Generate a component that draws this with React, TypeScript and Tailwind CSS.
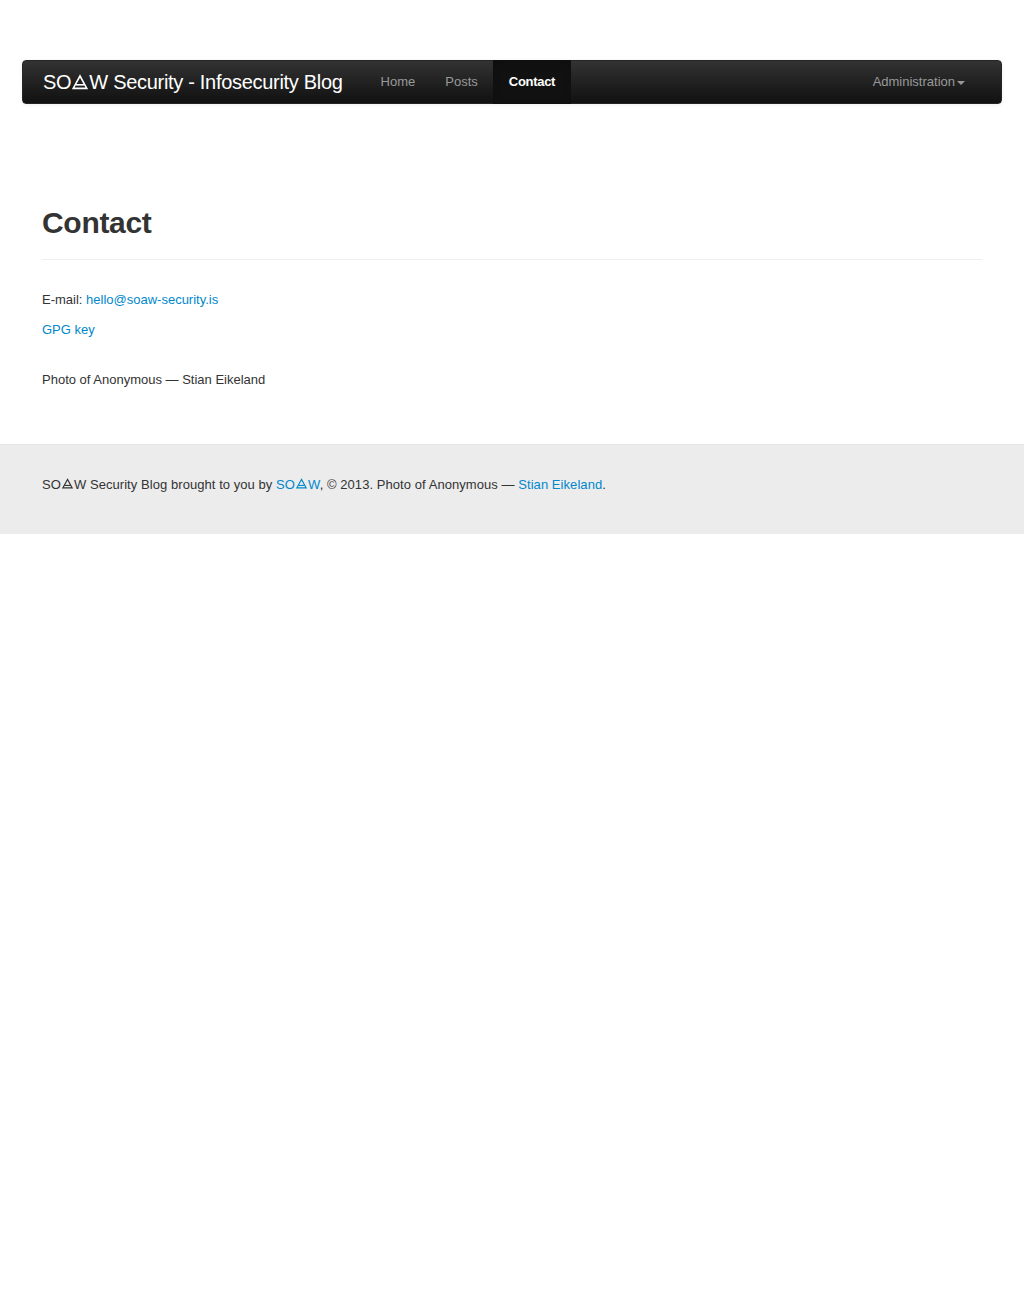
import React from "react";

function Tri({ size }: { size: number }) {
  return (
    <svg
      width={size}
      height={size}
      viewBox="0 0 20 20"
      className="inline-block align-baseline"
      style={{ marginLeft: 1, marginRight: 1 }}
      fill="none"
      stroke="currentColor"
      strokeWidth={2}
    >
      <polygon points="10,2.5 18.5,18 1.5,18" strokeLinejoin="miter" />
      <line x1="4.5" y1="13.5" x2="15.5" y2="13.5" />
    </svg>
  );
}

export default function App() {
  const font = { fontFamily: '"Liberation Sans", Arial, sans-serif' };
  return (
    <div className="min-h-[1309px] bg-white text-[#333333]" style={font}>
      <div className="pt-[60px] px-[22px]">
        <div className="h-[44px] rounded-[4px] border border-[#252525] bg-gradient-to-b from-[#333333] to-[#111111] flex items-stretch px-[20px] shadow-[0_1px_4px_rgba(0,0,0,0.065)]">
          <a className="flex items-center text-white text-[20px] tracking-[-0.3px] pr-[23px] leading-none whitespace-nowrap">
            <span>SO</span>
            <span className="relative top-[1px]"><Tri size={16} /></span>
            <span>W Security - Infosecurity Blog</span>
          </a>
          <nav className="flex items-stretch text-[13px]">
            <a className="flex items-center px-[15px] text-[#999999]">Home</a>
            <a className="flex items-center px-[15px] text-[#999999]">Posts</a>
            <a className="flex items-center px-[16px] text-white font-bold tracking-[-0.3px] bg-[#111111] shadow-[inset_0_3px_8px_rgba(0,0,0,0.125)] -my-px">Contact</a>
          </nav>
          <div className="flex-1" />
          <a className="flex items-center px-[15px] mr-[1px] text-[13px] text-[#999999]">
            Administration
            <span className="ml-[2px] mt-[1px] inline-block w-0 h-0 border-l-[4px] border-r-[4px] border-t-[4px] border-l-transparent border-r-transparent border-t-[#999999]" />
          </a>
        </div>
      </div>

      <div className="w-[940px] mx-auto">
        <div className="mt-[99px] pb-[16px] border-b border-[#eeeeee]">
          <h1 className="text-[30px] font-bold tracking-[-0.3px] leading-[40px] text-[#333333]">Contact</h1>
        </div>
        <div className="pt-[30px] text-[13px] leading-[20px]">
          <p className="mb-[10px]">
            E-mail: <a className="text-[#0088cc]">hello@soaw-security.is</a>
          </p>
          <p className="mb-[30px]">
            <a className="text-[#0088cc]">GPG key</a>
          </p>
          <p>Photo of Anonymous — Stian Eikeland</p>
        </div>
      </div>

      <footer className="mt-[54px] bg-[#ececec] border-t border-[#e5e5e5] pt-[30px] pb-[39px]">
        <div className="w-[940px] mx-auto text-[13px] tracking-[0.06px] leading-[20px] text-[#333333]">
          SO<Tri size={11} />W Security Blog brought to you by{" "}
          <a className="text-[#0088cc]">SO<Tri size={11} />W</a>, © 2013. Photo of Anonymous —{" "}
          <a className="text-[#0088cc]">Stian Eikeland</a>.
        </div>
      </footer>
    </div>
  );
}
